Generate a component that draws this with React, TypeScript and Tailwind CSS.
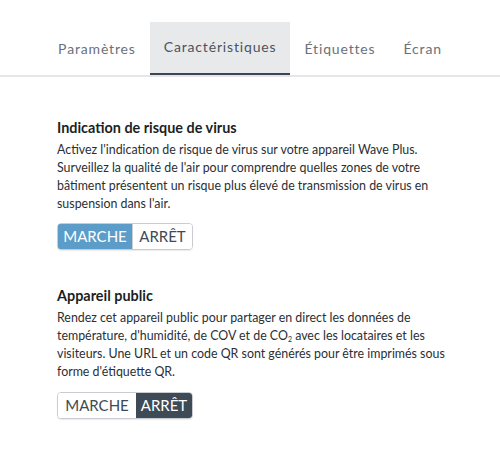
import React from "react";

function Toggle({ on }: { on: boolean }) {
  return (
    <div className="flex h-[27px] w-[136px] rounded-[4px] border border-[#c9cdd1] overflow-hidden text-[15px] leading-none shadow-[0_1px_1px_rgba(0,0,0,0.08)]">
      <div
        className={
          on
            ? "flex w-[76px] items-center justify-center bg-[#5b9cc8] text-white border border-[#3f7fae] rounded-l-[4px] -m-px"
            : "flex w-[78px] items-center justify-center bg-white text-[#3e4a54]"
        }
      >
        MARCHE
      </div>
      <div
        className={
          on
            ? "flex flex-1 items-center justify-center bg-white text-[#3e4a54] border-l border-[#c9cdd1]"
            : "flex flex-1 items-center justify-center bg-[#3e4a55] text-white"
        }
      >
        ARRÊT
      </div>
    </div>
  );
}

export default function App() {
  const tabs = ["Paramètres", "Caractéristiques", "Étiquettes", "Écran"];
  return (
    <div className="w-[500px] h-[459px] bg-white font-['Lato',sans-serif] text-[#1f2429]">
      <div className="pt-[22px] border-b-2 border-[#e4e6e9] flex justify-center">
        {tabs.map((t, i) => (
          <div
            key={t}
            className={
              i === 1
                ? "h-[53px] px-[14px] flex items-center bg-[#e8e9eb] text-[#4a545e] text-[14px] tracking-[0.06em] border-b-2 border-[#3c4650] -mb-[2px] pb-[2px]"
                : "h-[53px] px-[14px] flex items-center text-[#6b7178] text-[14px] tracking-[0.06em]"
            }
          >
            {t}
          </div>
        ))}
      </div>
      <div className="pl-[57px] pr-[20px]">
        <h2 className="mt-[41px] text-[14.4px] font-bold leading-[20px] text-[#1a1f24]">
          Indication de risque de virus
        </h2>
        <p className="mt-[3px] text-[12.4px] leading-[18px] text-[#2a2f34] whitespace-nowrap">
          Activez l'indication de risque de virus sur votre appareil Wave Plus.
          <br />
          Surveillez la qualité de l'air pour comprendre quelles zones de votre
          <br />
          bâtiment présentent un risque plus élevé de transmission de virus en
          <br />
          suspension dans l'air.
        </p>
        <div className="mt-[10px]">
          <Toggle on />
        </div>
        <h2 className="mt-[36px] text-[14.4px] font-bold leading-[20px] text-[#1a1f24]">
          Appareil public
        </h2>
        <p className="mt-[3px] text-[12.4px] leading-[18px] text-[#2a2f34] whitespace-nowrap">
          Rendez cet appareil public pour partager en direct les données de
          <br />
          température, d'humidité, de COV et de CO
          <sub className="text-[7px] leading-none">2</sub> avec les locataires et les
          <br />
          visiteurs. Une URL et un code QR sont générés pour être imprimés sous
          <br />
          forme d'étiquette QR.
        </p>
        <div className="mt-[11px]">
          <Toggle on={false} />
        </div>
      </div>
    </div>
  );
}
